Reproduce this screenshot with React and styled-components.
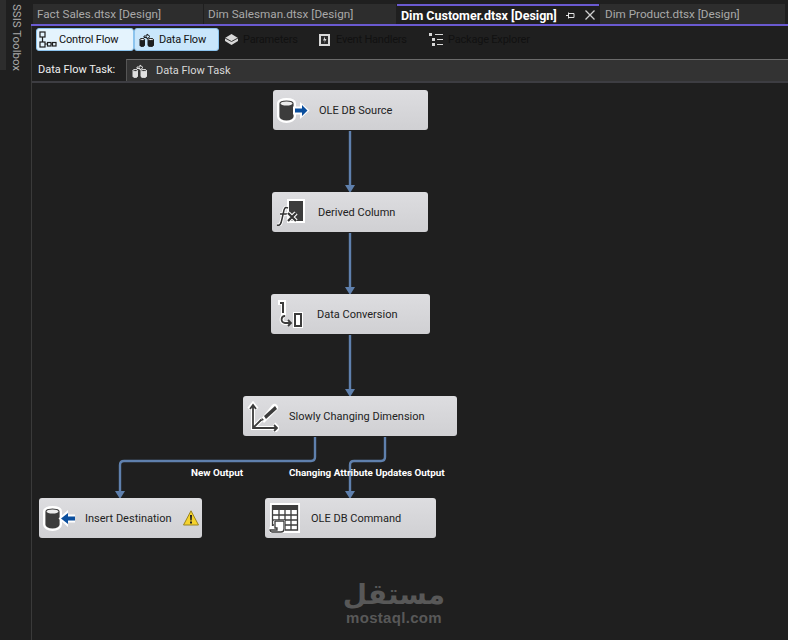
import React from 'react';
import styled, { createGlobalStyle } from 'styled-components';

const GlobalStyle = createGlobalStyle`
  html, body, #root { margin: 0; height: 100%; }
  body {
    background: #1f1f1f;
    font-family: Roboto, "Liberation Sans", sans-serif;
    overflow: hidden;
  }
`;

const Shell = styled.div`
  display: flex;
  width: 788px;
  height: 640px;
`;

const Rail = styled.div`
  width: 31px;
  flex: none;
  display: flex;
  align-items: flex-start;
`;

const RailGrip = styled.div`
  width: 6px;
  height: 70px;
  background: #2d2d2d;
`;

const RailLabel = styled.div`
  writing-mode: vertical-rl;
  margin: 4px 0 0 5px;
  font-size: 11.5px;
  line-height: 12px;
  color: #a8a8a8;
`;

const Main = styled.div`
  flex: 1;
  min-width: 0;
  display: flex;
  flex-direction: column;
`;

const TabStrip = styled.div`
  display: flex;
  height: 24px;
  padding-left: 2px;
  gap: 1px;
  border-bottom: 2px solid #6a5ad0;
`;

const Tab = styled.div`
  display: flex;
  align-items: center;
  width: ${(p) => p.$w}px;
  margin-top: 4px;
  padding-left: ${(p) => p.$pad || 4}px;
  box-sizing: border-box;
  background: ${(p) => (p.$active ? '#1f1f1f' : '#2d2d2d')};
  border-top: ${(p) => (p.$active ? '2px solid #6a5ad0' : 'none')};
  color: ${(p) => (p.$active ? '#ffffff' : '#a9a9a9')};
  font-size: ${(p) => (p.$active ? 12.5 : 11.7)}px;
  font-weight: ${(p) => (p.$active ? 700 : 400)};
  white-space: nowrap;
`;

const TabTools = styled.div`
  display: flex;
  align-items: center;
  gap: 10px;
  margin-left: 9px;
`;

const Body = styled.div`
  flex: 1;
  display: flex;
  flex-direction: column;
  border-left: 1px solid #3a3a3a;
  min-height: 0;
`;

const DesignerTabs = styled.div`
  display: flex;
  align-items: flex-start;
  height: 32px;
  box-sizing: border-box;
  padding: 2px 0 0 4px;
`;

const DesignerTab = styled.div`
  display: flex;
  align-items: center;
  gap: ${(p) => p.$iconGap || 4}px;
  height: 23px;
  box-sizing: border-box;
  width: ${(p) => p.$w}px;
  padding-left: ${(p) => p.$pad || 0}px;
  margin-right: ${(p) => p.$gap || 0}px;
  border-radius: 3px;
  font-size: 11px;
  letter-spacing: -0.2px;
  white-space: nowrap;
  color: #111;
  background: ${(p) => (p.$selected ? (p.$hover ? '#c9e6fb' : '#e4f3fd') : 'transparent')};
  border: ${(p) => (p.$selected ? '1px solid #8cc4ee' : 'none')};
`;

const Breadcrumb = styled.div`
  display: flex;
  align-items: stretch;
  height: 22px;
  margin-top: 1px;
  border-bottom: 3px solid #3d3d42;
`;

const CrumbLabel = styled.div`
  width: 94px;
  box-sizing: border-box;
  padding: 0 0 2px 6px;
  display: flex;
  align-items: center;
  color: #f0f0f0;
  font-size: 11px;
`;

const CrumbBox = styled.div`
  flex: 1;
  display: flex;
  align-items: center;
  gap: 8px;
  padding-left: 5px;
  background: #333333;
  border-top: 1px solid #6a6a6a;
  border-left: 1px solid #555;
  color: #d8d8d8;
  font-size: 11px;
`;

const Canvas = styled.div`
  position: relative;
  flex: 1;
  margin-top: -1px;
  background: #1f1f1f;
`;

const Wires = styled.svg`
  position: absolute;
  left: 0;
  top: 0;
`;

const Node = styled.div`
  position: absolute;
  left: ${(p) => p.$x - 32}px;
  top: ${(p) => p.$y - 83}px;
  width: ${(p) => p.$w}px;
  height: 40px;
  display: flex;
  align-items: center;
  border-radius: 3px;
  background: linear-gradient(#dddde0, #d0d0d3);
  color: #222;
  font-size: 11px;
  white-space: nowrap;
`;

const NodeIcon = styled.div`
  width: 46px;
  height: 40px;
  flex: none;
  display: flex;
  align-items: center;
  padding-left: 4px;
  box-sizing: border-box;
`;

const NodeWarning = styled.div`
  position: absolute;
  right: 3px;
  top: 12px;
  display: flex;
`;

const PathLabel = styled.div`
  position: absolute;
  left: ${(p) => p.$x - 32}px;
  top: 384px;
  color: #fff;
  font-size: 9.9px;
  font-weight: 700;
  line-height: 12px;
  white-space: nowrap;
`;

const Watermark = styled.div`
  position: absolute;
  left: 314px;
  top: 500px;
  width: 96px;
  display: flex;
  flex-direction: column;
  align-items: center;
  color: #585858;
  font-weight: 700;
`;

const WatermarkArabic = styled.div`
  font-family: "DejaVu Sans", sans-serif;
  font-size: 28px;
  line-height: 24px;
`;

const WatermarkLatin = styled.div`
  font-family: "Liberation Sans", sans-serif;
  font-size: 15px;
  line-height: 16px;
  letter-spacing: 0.3px;
  margin-top: 3px;
`;

const Cylinder = () => (
  <g>
    <path d="M1.200 5.500C1.200 2.500 5 1.200 9.500 1.200S17.800 2.500 17.800 5.500v13c0 3-3.800 5.300-8.300 5.300S1.200 21.500 1.200 18.500z" fill="#3c3c3c" stroke="#fff" strokeWidth="2.400" />
    <ellipse cx="9.500" cy="5.500" rx="6" ry="2" fill="#ececec" />
  </g>
);

const SourceIcon = () => (
  <svg width="33" height="25" viewBox="0 0 33 25">
    <Cylinder />
    <path d="M16 8.500h7V4l9.500 8.500L23 21v-4.500h-7z" fill="#fff" />
    <path d="M18 10.500h7V7l5.500 5.500L25 18v-3.500h-7z" fill="#0b4f9e" />
  </svg>
);

const DestinationIcon = () => (
  <svg width="33" height="25" viewBox="0 0 33 25">
    <Cylinder />
    <path d="M32 8.500h-7V4l-9.500 8.500L25 21v-4.500h7z" fill="#fff" />
    <path d="M32 10.500h-7V7l-7 5.500 7 5.500v-3.500h7z" fill="#0b4f9e" />
  </svg>
);

const DerivedIcon = () => (
  <svg width="30" height="27" viewBox="0 0 30 27">
    <rect x="12" y="1" width="16" height="22" fill="#3c3c3c" stroke="#fff" strokeWidth="2" />
    <path d="M1 26c3 1 4-1 5-6l2-9c1-3 2-3 4-2M4 15h7" fill="none" stroke="#fff" strokeWidth="3.500" />
    <path d="M1 26c3 1 4-1 5-6l2-9c1-3 2-3 4-2M4 15h7" fill="none" stroke="#333" strokeWidth="1.500" />
    <path d="M12 14l8 8M20 14l-8 8" stroke="#fff" strokeWidth="4.500" />
    <path d="M12 14l8 8M20 14l-8 8" stroke="#333" strokeWidth="2.200" />
  </svg>
);

const ConversionIcon = () => (
  <svg width="30" height="30" viewBox="0 0 30 30">
    <path d="M3 1h8v15H6V6H3z" fill="#fff" />
    <path d="M5 3h4v11H7V5H5z" fill="#3c3c3c" />
    <rect x="18" y="13" width="10" height="16" fill="#fff" />
    <rect x="20" y="15" width="6" height="12" fill="none" stroke="#3c3c3c" strokeWidth="2" />
    <path d="M10 17c-4 0-5 6 0 7h6" fill="none" stroke="#fff" strokeWidth="4" />
    <path d="M10 17c-4 0-5 6 0 7h6M13 21l3 3-3 3" fill="none" stroke="#3c3c3c" strokeWidth="1.800" />
  </svg>
);

const DimensionIcon = () => (
  <svg width="32" height="32" viewBox="0 0 32 32">
    <path d="M6 5v23h25M2 9l4-5 4 5M27 24l4 4-4 4M6 28l9-9" fill="none" stroke="#fff" strokeWidth="4" />
    <path d="M6 5v23h24M3 9l3-4 3 4M27 25l3 3-3 3M6 28l9-9" fill="none" stroke="#3c3c3c" strokeWidth="1.800" />
    <path d="M14 19l3 4 13-13c2-2 1-4 0-5s-3-2-5 0z" fill="#fff" />
    <path d="M17 16l11-10 2 3-11 10z" fill="#3c3c3c" />
    <path d="M14 21l3-1-2-2z" fill="#3c3c3c" />
  </svg>
);

const CommandIcon = () => (
  <svg width="32" height="32" viewBox="0 0 32 32">
    <rect x="1" y="1" width="30" height="30" fill="#fff" />
    <path d="M3 3h26v5H3z" fill="#3c3c3c" />
    <path d="M3.500 3v25h25V3M3 13h26M3 18h26M3 23h26M10 8v20M16 8v20M22 8v20" fill="none" stroke="#3c3c3c" strokeWidth="1.300" />
    <path d="M1 24h4v-6h11v9c0 3-2 4-4 4H3c-2 0-3-1-3-3z" fill="#fff" />
    <path d="M6 19h9v8c0 2-1 3-3 3H3c-1 0-2-1-2-2h7v-2H6z" fill="none" stroke="#3c3c3c" strokeWidth="1.300" />
  </svg>
);

const WarningIcon = () => (
  <svg width="16" height="16" viewBox="0 0 16 16">
    <path d="M8 .8L15.500 15H.5z" fill="#f6d32d" stroke="#9a8420" strokeWidth="1" />
    <path d="M7 5h2l-.3 5.500H7.300zM7 11.500h2v2H7z" fill="#222" />
  </svg>
);

const PinIcon = () => (
  <svg width="9" height="9" viewBox="0 0 9 9">
    <path d="M0 4.500h2.500M2.500 1.500v6M2.500 2.500h5.500v4H2.500" fill="none" stroke="#e0e0e0" strokeWidth="1" />
  </svg>
);

const CloseIcon = () => (
  <svg width="10" height="10" viewBox="0 0 10 10">
    <path d="M.5.500l9 9M9.500.500l-9 9" stroke="#d0d0d0" strokeWidth="1.300" />
  </svg>
);

const ControlFlowIcon = () => (
  <svg width="18" height="18" viewBox="0 0 18 18">
    <g fill="none" stroke="#1e1e1e" strokeWidth="1.200">
      <rect x="1" y="1" width="5" height="5" />
      <rect x="1" y="11" width="5" height="5" />
      <rect x="8.500" y="11.500" width="3.500" height="3.500" />
      <rect x="13.500" y="11.500" width="3.500" height="3.500" />
      <path d="M3.500 6v5M6 13h2.500M12 13h1.500" />
    </g>
  </svg>
);

const BarrelsIcon = ({ color = '#1e1e1e', fill = '#fff' }) => (
  <svg width="16" height="14" viewBox="0 0 16 14">
    <g stroke={color} strokeWidth="1" fill={fill}>
      <path d="M1 6.500c0-1 4.500-1 4.500 0v6c0 1.300-4.500 1.300-4.500 0z" fill={color} />
      <path d="M9 6.500c0-1 5.500-1 5.500 0v6c0 1.300-5.500 1.300-5.500 0z" fill={color} />
      <ellipse cx="3.300" cy="6.500" rx="2.300" ry="1" />
      <ellipse cx="11.800" cy="6.500" rx="2.700" ry="1" />
      <path d="M5 3h3V1l3 2.500L8 6V4.500H5z" fill="none" />
    </g>
  </svg>
);

const ParametersIcon = () => (
  <svg width="15" height="13" viewBox="0 0 15 13">
    <path d="M1 5l6.500-4L14 5v3l-6.500 4L1 8z" fill="#d8d8d8" />
    <path d="M1 5l6.500 3.500L14 5" fill="none" stroke="#333" strokeWidth="1" />
  </svg>
);

const EventIcon = () => (
  <svg width="13" height="14" viewBox="0 0 13 14">
    <rect x="1" y="1" width="11" height="12" fill="#d8d8d8" />
    <rect x="3" y="3" width="7" height="8" fill="#2a2a2a" />
    <path d="M7 3.500L5 7.500h2l-1 3 2.500-4.500H7z" fill="#d8d8d8" />
  </svg>
);

const ExplorerIcon = () => (
  <svg width="15" height="15" viewBox="0 0 15 15">
    <g fill="#d8d8d8">
      <rect x="0" y="1" width="3" height="3" />
      <rect x="3" y="6" width="3" height="3" />
      <rect x="3" y="11" width="3" height="3" />
      <rect x="6" y="2" width="8" height="1" />
      <rect x="8" y="7" width="6" height="1" />
      <rect x="8" y="12" width="6" height="1" />
    </g>
  </svg>
);

const tabs = [
  { name: 'Fact Sales.dtsx [Design]', w: 170 },
  { name: 'Dim Salesman.dtsx [Design]', w: 192 },
];

const nodes = [
  { name: 'OLE DB Source', x: 273, y: 90, w: 155, icon: <SourceIcon /> },
  { name: 'Derived Column', x: 272, y: 192, w: 156, icon: <DerivedIcon /> },
  { name: 'Data Conversion', x: 271, y: 294, w: 159, icon: <ConversionIcon /> },
  { name: 'Slowly Changing Dimension', x: 243, y: 396, w: 214, icon: <DimensionIcon /> },
  { name: 'Insert Destination', x: 39, y: 498, w: 163, icon: <DestinationIcon />, warning: true },
  { name: 'OLE DB Command', x: 265, y: 498, w: 171, icon: <CommandIcon /> },
];

// wire paths in page coordinates, the svg is shifted by the canvas origin
const wires = [
  { d: 'M350 131V186', tip: [350, 193] },
  { d: 'M350 233V288', tip: [350, 295] },
  { d: 'M350 335V390', tip: [350, 397] },
  { d: 'M315 437V457Q315 461 311 461H124Q120 461 120 465V492', tip: [120, 499] },
  { d: 'M385 437V457Q385 461 381 461H354Q350 461 350 465V492', tip: [350, 499] },
];

export default function App() {
  return (
    <>
      <GlobalStyle />
      <Shell>
        <Rail>
          <RailGrip />
          <RailLabel>SSIS Toolbox</RailLabel>
        </Rail>
        <Main>
          <TabStrip>
            {tabs.map((t) => (
              <Tab key={t.name} $w={t.w}>{t.name}</Tab>
            ))}
            <Tab $active $w={202}>
              Dim Customer.dtsx [Design]
              <TabTools>
                <PinIcon />
                <CloseIcon />
              </TabTools>
            </Tab>
            <Tab $w={185} $pad={5}>Dim Product.dtsx [Design]</Tab>
          </TabStrip>
          <Body>
            <DesignerTabs>
              <DesignerTab $selected $w={98} $pad={2} $iconGap={2}><ControlFlowIcon />Control Flow</DesignerTab>
              <DesignerTab $selected $hover $w={85} $gap={5} $pad={4}><BarrelsIcon />Data Flow</DesignerTab>
              <DesignerTab $w={94}><ParametersIcon />Parameters</DesignerTab>
              <DesignerTab $w={111} $iconGap={5}><EventIcon />Event Handlers</DesignerTab>
              <DesignerTab $w={120}><ExplorerIcon />Package Explorer</DesignerTab>
            </DesignerTabs>
            <Breadcrumb>
              <CrumbLabel>Data Flow Task:</CrumbLabel>
              <CrumbBox>
                <BarrelsIcon color="#e0e0e0" fill="#333" />
                Data Flow Task
              </CrumbBox>
            </Breadcrumb>
            <Canvas>
              <Wires width="756" height="557" viewBox="32 83 756 557">
                {wires.map((w) => (
                  <g key={w.d}>
                    <path d={w.d} fill="none" stroke="#5f80ad" strokeWidth="2.400" />
                    <path d={`M${w.tip[0] - 5} ${w.tip[1] - 8}h10l-5 8z`} fill="#5f80ad" />
                  </g>
                ))}
              </Wires>
              {nodes.map((n) => (
                <Node key={n.name} $x={n.x} $y={n.y} $w={n.w}>
                  <NodeIcon>{n.icon}</NodeIcon>
                  {n.name}
                  {n.warning && (
                    <NodeWarning><WarningIcon /></NodeWarning>
                  )}
                </Node>
              ))}
              <PathLabel $x={191}>New Output</PathLabel>
              <PathLabel $x={289}>Changing Attribute Updates Output</PathLabel>
              <Watermark>
                <WatermarkArabic>مستقل</WatermarkArabic>
                <WatermarkLatin>mostaql.com</WatermarkLatin>
              </Watermark>
            </Canvas>
          </Body>
        </Main>
      </Shell>
    </>
  );
}
